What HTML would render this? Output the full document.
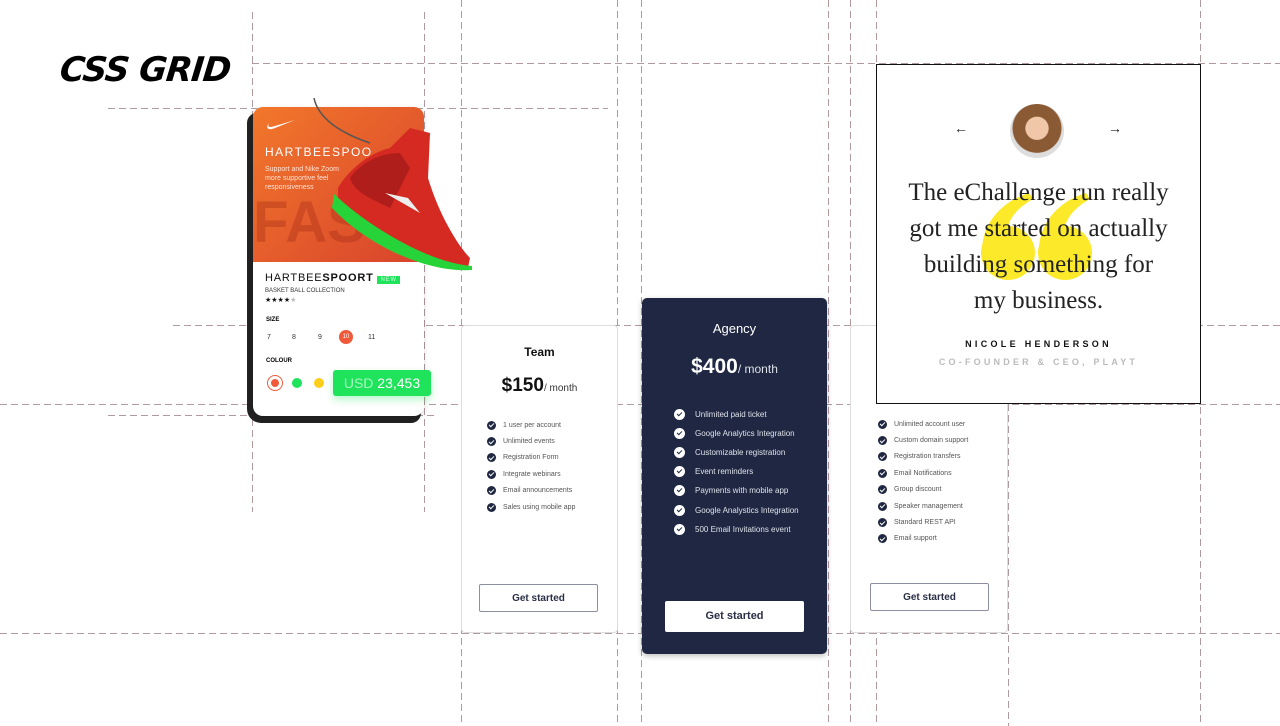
<!DOCTYPE html>
<html><head><meta charset="utf-8"><style>
*{margin:0;padding:0;box-sizing:border-box}
body{width:1280px;height:726px;background:#fff;position:relative;overflow:hidden;font-family:"Liberation Sans",sans-serif}
.v{position:absolute;width:1px;background:repeating-linear-gradient(to bottom,#b09a9e 0 7px,transparent 7px 11px)}
.h{position:absolute;height:1px;background:repeating-linear-gradient(to right,#b09a9e 0 7px,transparent 7px 11px)}
.abs{position:absolute}
.card{position:absolute;border:1px solid #ddd;border-radius:4px;background:#fff}
ul{list-style:none}
li{display:flex;align-items:center;font-size:7px;color:#555;height:16.4px}
li i{display:inline-block;width:9px;height:9px;border-radius:50%;background:#1f2742;margin-right:7px;position:relative;flex:none}
li i:after{content:"";position:absolute;left:3px;top:1.6px;width:2px;height:4px;border:solid #fff;border-width:0 1.2px 1.2px 0;transform:rotate(45deg)}
.ag li{font-size:8px;color:#dfe2ea;height:19.1px}
.ag li i{background:#fff;width:11px;height:11px;margin-right:10px}
.ag li i:after{border-color:#1f2742;left:4px;top:2px}
.btn{position:absolute;border:1px solid #8b8fa0;border-radius:2px;font-size:10px;color:#2a2f45;text-align:center;font-weight:bold;background:#fff}
</style></head><body>
<div class="v" style="left:252px;top:12px;height:500px"></div>
<div class="v" style="left:424px;top:12px;height:500px"></div>
<div class="v" style="left:461px;top:0;height:726px"></div>
<div class="v" style="left:617px;top:0;height:726px"></div>
<div class="v" style="left:641px;top:0;height:726px"></div>
<div class="v" style="left:828px;top:0;height:726px"></div>
<div class="v" style="left:850px;top:0;height:726px"></div>
<div class="v" style="left:876px;top:0;height:726px"></div>
<div class="v" style="left:1008px;top:404px;height:322px"></div>
<div class="v" style="left:1200px;top:0;height:726px"></div>
<div class="h" style="left:252px;top:63px;width:1028px"></div>
<div class="h" style="left:108px;top:108px;width:500px"></div>
<div class="h" style="left:173px;top:325px;width:1107px"></div>
<div class="h" style="left:0;top:404px;width:1280px"></div>
<div class="h" style="left:108px;top:415px;width:326px"></div>
<div class="h" style="left:0;top:633px;width:1280px"></div>

<div class="abs" style="left:60px;top:50px;font:italic 900 34px 'DejaVu Sans',sans-serif;letter-spacing:-1px;transform:skewX(-6deg)">CSS GRID</div>

<div class="abs" style="left:247px;top:113px;width:174px;height:310px;background:#222;border-radius:10px 0 10px 14px"></div>
<div class="abs" style="left:253px;top:107px;width:171px;height:309px;background:#fff;border-radius:10px;overflow:hidden;box-shadow:0 2px 6px rgba(0,0,0,.15)">
 <div style="height:155px;background:linear-gradient(135deg,#f2772b,#d8432c);position:relative;overflow:hidden">
  <svg width="30" height="12" style="position:absolute;left:12px;top:12px" viewBox="0 0 30 12"><path d="M4 4C0 9 3 12 10 9L30 1 10 7C4 9 2 8 4 4Z" fill="#fff"/></svg>
  <div style="position:absolute;left:12px;top:38px;color:#fff;font-size:12px;letter-spacing:1.5px">HARTBEESPOO</div>
  <div style="position:absolute;left:12px;top:58px;color:#ffe3d5;font-size:7px;line-height:9px">Support and Nike Zoom<br>more supportive feel<br>responsiveness</div>
  <div style="position:absolute;left:0;top:82px;color:rgba(160,40,20,.35);font:900 58px 'Liberation Sans'">FAST</div>
 </div>
 <div style="position:absolute;left:12px;top:165px;font-size:11px;letter-spacing:.8px;color:#111">HARTBEE<b>SPOORT</b> <span style="background:#1ee35b;color:#cfffdc;font-size:6px;padding:1px 3px">NEW</span></div>
 <div style="position:absolute;left:12px;top:181px;font-size:6px;color:#333">BASKET BALL COLLECTION</div>
 <div style="position:absolute;left:12px;top:189px;font-size:7px;color:#111">★★★★<span style="color:#bbb">★</span></div>
 <div style="position:absolute;left:13px;top:210px;font-size:6px;font-weight:bold">SIZE</div>
 <div style="position:absolute;left:14px;top:227px;font-size:7px;color:#333"><span style="position:absolute;left:0">7</span><span style="position:absolute;left:25px">8</span><span style="position:absolute;left:51px">9</span><span style="position:absolute;left:72px;top:-4px;width:14px;height:14px;border-radius:50%;background:#f05a3a;color:#fff;text-align:center;line-height:14px;font-size:6px">10</span><span style="position:absolute;left:101px">11</span></div>
 <div style="position:absolute;left:13px;top:251px;font-size:6px;font-weight:bold">COLOUR</div>
 <div style="position:absolute;left:14px;top:268px;width:16px;height:16px;border:1px solid #f05a3a;border-radius:50%"><div style="margin:3px;width:8px;height:8px;border-radius:50%;background:#f05a3a"></div></div>
 <div style="position:absolute;left:39px;top:271px;width:10px;height:10px;border-radius:50%;background:#1ee35b"></div>
 <div style="position:absolute;left:61px;top:271px;width:10px;height:10px;border-radius:50%;background:#fcce1c"></div>
</div>
<div class="abs" style="left:333px;top:370px;width:98px;height:26px;background:#1ee35b;border-radius:3px;color:#fff;font-size:14px;line-height:26px;text-align:center;box-shadow:0 4px 8px rgba(30,227,91,.3)"><span style="color:#a8f7c0">USD</span> 23,453</div>
<svg class="abs" style="left:310px;top:98px" width="170" height="180" viewBox="0 0 170 180">
 <path d="M4 0C8 20 30 35 60 45" stroke="#555" stroke-width="1.5" fill="none"/>
 <path d="M28 90C40 70 60 55 80 50L100 30 120 35 118 80C130 120 150 150 160 160L158 170C120 170 60 140 28 110Z" fill="#d42a22"/>
 <path d="M40 80C50 65 70 55 90 55L100 70 80 110C60 100 45 95 40 80Z" fill="#b01e1c"/>
 <path d="M75 95L110 115 98 100Z" fill="#eee"/>
 <path d="M24 96C60 130 120 165 162 168L162 172C120 175 60 150 22 110Z" fill="#26d43a"/>
</svg>

<div class="card" style="left:461px;top:325px;width:157px;height:308px">
 <div style="position:absolute;top:19px;width:100%;text-align:center;font-size:12px;font-weight:bold;color:#111">Team</div>
 <div style="position:absolute;top:49px;width:100%;text-align:center;font-size:19px;font-weight:bold;color:#111">$150<span style="font-size:10px;font-weight:normal;color:#333">/ month</span></div>
 <ul style="position:absolute;left:25px;top:91px"><li><i></i>1 user per account</li><li><i></i>Unlimited events</li><li><i></i>Registration Form</li><li><i></i>Integrate webinars</li><li><i></i>Email announcements</li><li><i></i>Sales using mobile app</li></ul>
</div>
<div class="btn" style="left:479px;top:584px;width:119px;height:28px;line-height:27px">Get started</div>

<div class="abs ag" style="left:642px;top:298px;width:185px;height:356px;background:#1f2742;border-radius:5px;box-shadow:0 2px 6px rgba(0,0,0,.25)">
 <div style="position:absolute;top:23px;width:100%;text-align:center;font-size:13px;color:#fff">Agency</div>
 <div style="position:absolute;top:57px;width:100%;text-align:center;font-size:21px;font-weight:bold;color:#fff">$400<span style="font-size:12px;font-weight:normal;color:#dfe2ea">/ month</span></div>
 <ul style="position:absolute;left:32px;top:107px"><li><i></i>Unlimited paid ticket</li><li><i></i>Google Analytics Integration</li><li><i></i>Customizable registration</li><li><i></i>Event reminders</li><li><i></i>Payments with mobile app</li><li><i></i>Google Analystics Integration</li><li><i></i>500 Email Invitations event</li></ul>
</div>
<div class="btn" style="left:665px;top:601px;width:139px;height:31px;line-height:31px;font-size:11px;border:none">Get started</div>

<div class="card" style="left:850px;top:325px;width:158px;height:308px"></div>
<ul class="abs" style="left:878px;top:416px"><li><i></i>Unlimited account user</li><li><i></i>Custom domain support</li><li><i></i>Registration transfers</li><li><i></i>Email Notifications</li><li><i></i>Group discount</li><li><i></i>Speaker management</li><li><i></i>Standard REST API</li><li><i></i>Email support</li></ul>
<div class="btn" style="left:870px;top:583px;width:119px;height:28px;line-height:27px">Get started</div>

<div class="abs" style="left:876px;top:64px;width:325px;height:340px;border:1px solid #111;background:#fff">
 <div style="position:absolute;left:77px;top:55px;font-size:14px;color:#222">←</div>
 <div style="position:absolute;left:231px;top:55px;font-size:14px;color:#222">→</div>
 <div style="position:absolute;left:133px;top:39px;width:54px;height:54px;border-radius:50%;background:radial-gradient(circle at 50% 45%,#f0c7a8 0 28%,#8a5a35 30% 60%,#ddd 62%)"></div>
 <svg style="position:absolute;left:100px;top:128px" width="120" height="88" viewBox="0 0 120 88">
  <g fill="#fbe92a">
   <circle cx="31" cy="60" r="27"/><path d="M5 58C5 30 25 8 52 0L56 6C38 16 28 30 30 45Z"/>
   <circle cx="88" cy="60" r="27"/><path d="M62 58C62 30 82 8 109 0L113 6C95 16 85 30 87 45Z"/>
  </g>
 </svg>
 <div style="position:absolute;top:110px;width:100%;text-align:center;font:25px/36px 'Liberation Serif','DejaVu Serif',serif;color:#222">The eChallenge run really<br>got me started on actually<br>building something for<br>my business.</div>
 <div style="position:absolute;top:274px;width:100%;text-align:center;font-size:9px;font-weight:bold;letter-spacing:3.3px;color:#111">NICOLE HENDERSON</div>
 <div style="position:absolute;top:292px;width:100%;text-align:center;font-size:9px;font-weight:bold;letter-spacing:3.2px;color:#bbb">CO-FOUNDER &amp; CEO, PLAYT</div>
</div>
</body></html>
